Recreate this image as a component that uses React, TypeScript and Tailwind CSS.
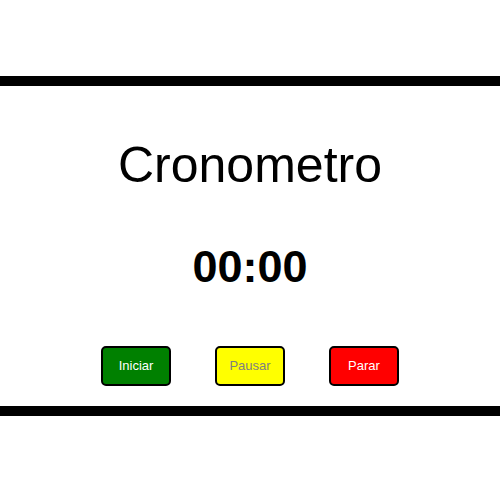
import React from "react";

export default function App() {
  return (
    <div className="w-[500px] h-[500px] bg-white pt-[76px]" style={{ fontFamily: '"Liberation Sans", Arial, sans-serif' }}>
      <div className="border-t-[10px] border-b-[10px] border-black flex flex-col items-center pt-[51px] pb-[20px]">
        <h1 className="text-[50px] leading-[56px] font-normal text-black">Cronometro</h1>
        <div className="mt-[49px] text-[45px] leading-[50px] font-bold text-black">00:00</div>
        <div className="mt-[54px] flex gap-[44px]">
          <button className="w-[70px] h-[40px] border-2 border-black rounded-[5px] bg-[#008000] text-white text-[13px]">Iniciar</button>
          <button className="w-[70px] h-[40px] border-2 border-black rounded-[5px] bg-[#ffff00] text-[#808080] text-[13px]">Pausar</button>
          <button className="w-[70px] h-[40px] border-2 border-black rounded-[5px] bg-[#ff0000] text-white text-[13px]">Parar</button>
        </div>
      </div>
    </div>
  );
}
